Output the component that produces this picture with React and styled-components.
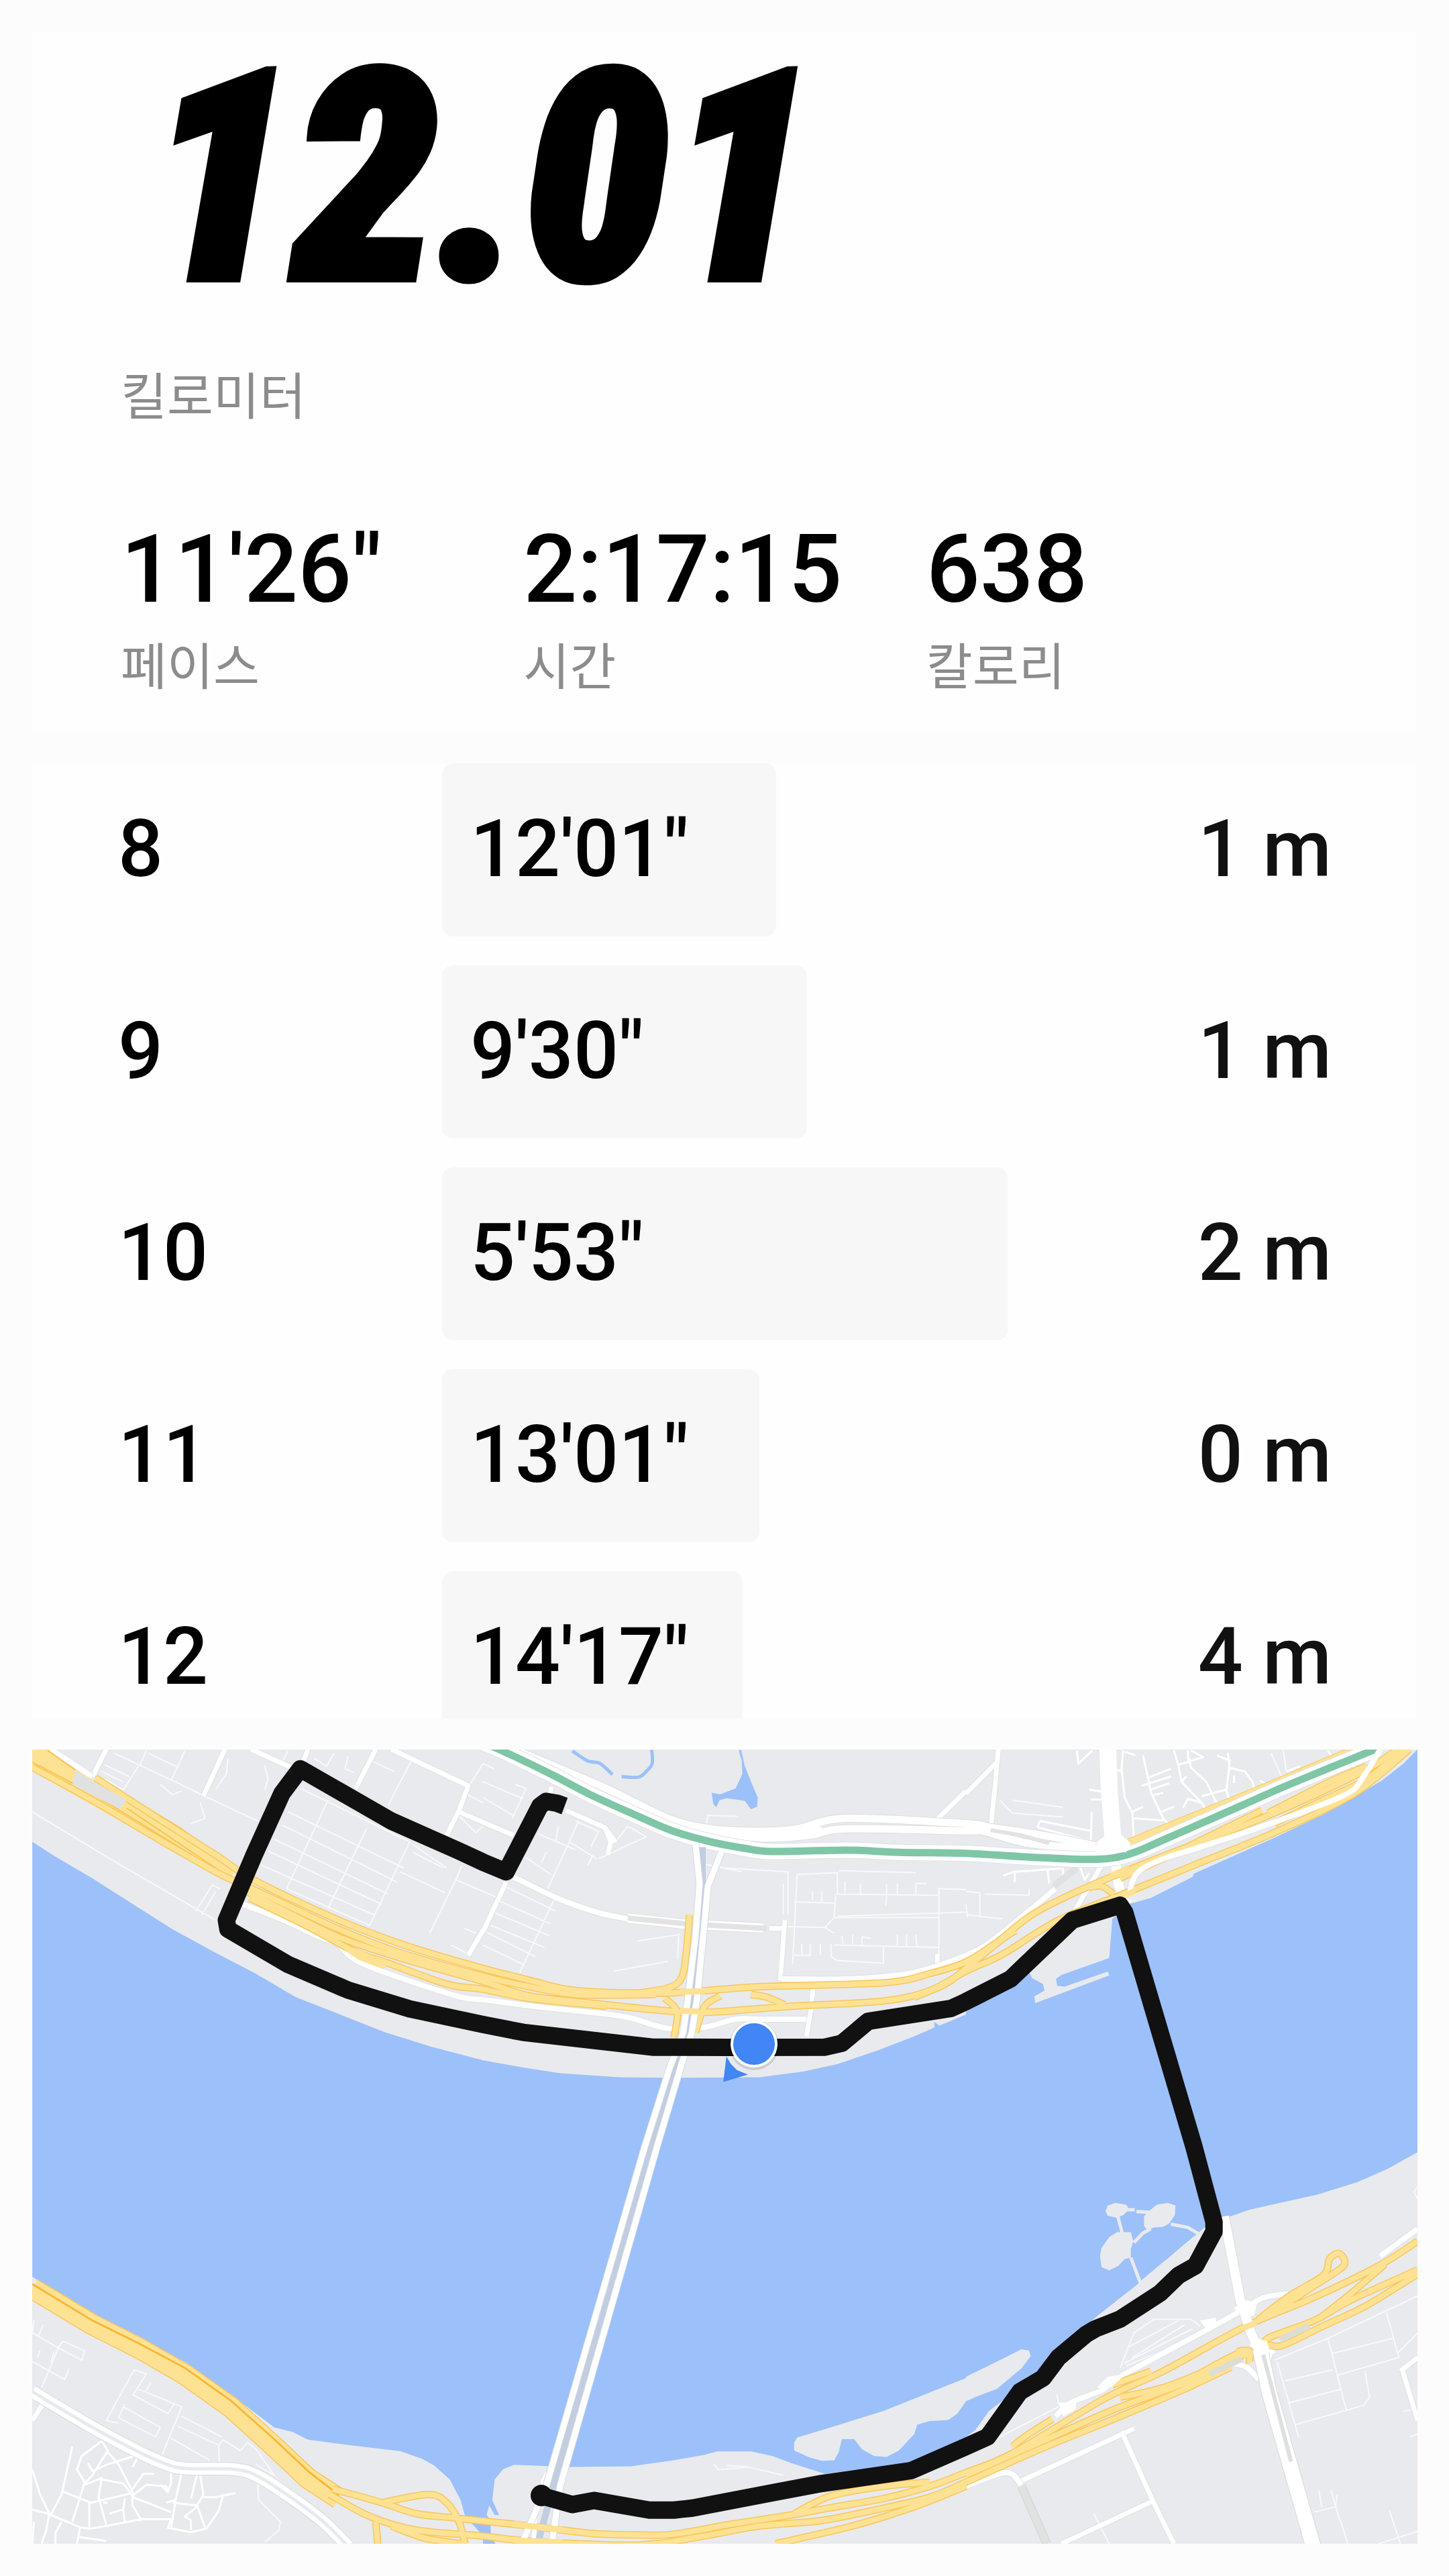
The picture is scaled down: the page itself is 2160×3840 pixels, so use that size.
import React from 'react';
import styled, { createGlobalStyle } from 'styled-components';

const GlobalStyle = createGlobalStyle`
  body {
    margin: 0;
    background: #fcfcfc;
    font-family: Roboto, "Noto Sans CJK KR", Arial, sans-serif;
    font-kerning: none;
    color: #000;
  }
`;

const Page = styled.main`
  display: flex;
  flex-direction: column;
  gap: 46px;
  padding: 48px 47px 48px 48px;
`;

const Card = styled.section`
  background: #fefefe;
  overflow: hidden;
`;

const Summary = styled(Card)`
  padding: 0 132px 55px;
`;

const Distance = styled.h1`
  margin: 0 0 54px 40px;
  font-family: "Roboto Condensed", Roboto, sans-serif;
  font-size: 436px;
  line-height: 436px;
  font-weight: 900;
  font-style: italic;
  -webkit-text-stroke: 12px #000;
`;

const Caption = styled.p`
  margin: 0;
  font-family: "Noto Sans CJK KR", sans-serif;
  font-size: 75px;
  line-height: 96px;
  font-weight: 400;
  color: #8c8c8c;
`;

const Stats = styled.dl`
  display: grid;
  grid-template-columns: repeat(3, 1fr);
  margin: 131px 0 0;
`;

const Stat = styled.div`
  display: flex;
  flex-direction: column-reverse;
  gap: 8px;
`;

const StatValue = styled.dd`
  margin: 0;
  font-size: 141px;
  line-height: 168px;
  font-weight: 500;
`;

const SplitsCard = styled(Card)`
  height: 1424px;
`;

const Splits = styled.table`
  width: 100%;
  border-spacing: 0;
  table-layout: fixed;
  font-size: 118px;
  line-height: 256px;
  font-weight: 500;
`;

const Cell = styled.td`
  padding: 0 0 43px;
  vertical-align: top;
`;

const Kilometre = styled(Cell)`
  width: 483px;
  padding-left: 128px;
`;

const Climb = styled(Cell)`
  width: 400px;
  padding-right: 128px;
  text-align: right;
  color: #111;
`;

const PaceBar = styled.div`
  box-sizing: border-box;
  height: 258px;
  padding-left: 42px;
  border-radius: 16px;
  background: #f7f7f7;
`;

const MapFrame = styled.section`
  svg {
    display: block;
    width: 100%;
    height: auto;
  }
`;

const splits = [
  { km: 8, pace: '12\'01"', climb: '1 m', bar: 498 },
  { km: 9, pace: '9\'30"', climb: '1 m', bar: 544 },
  { km: 10, pace: '5\'53"', climb: '2 m', bar: 843 },
  { km: 11, pace: '13\'01"', climb: '0 m', bar: 473 },
  { km: 12, pace: '14\'17"', climb: '4 m', bar: 448 },
];

/* Map geometry: six survey sheets, A B C above D E F, each on a 1568 unit grid. */
const sheets = {
  A: [0, 2590, 0.4592, 0.389],
  B: [720, 2590, 0.4592, 0.389],
  C: [1440, 2590, 0.4592, 0.389],
  D: [0, 3200, 0.4592, 0.4082],
  E: [720, 3200, 0.4592, 0.4082],
  F: [1440, 3200, 0.4592, 0.4082],
};

const project = (text) => {
  let sheet = sheets.A;
  const points = [];
  text.trim().split(/\s+/).forEach((token) => {
    if (sheets[token]) {
      sheet = sheets[token];
      return;
    }
    const [x, y] = token.split(',').map(Number);
    points.push([sheet[0] + x * sheet[2], sheet[1] + y * sheet[3]]);
  });
  return points;
};

const at = ([x, y]) => `${x.toFixed(1)} ${y.toFixed(1)}`;

const line = (text) => 'M' + project(text).map(at).join('L');

const curve = (text) => {
  const p = project(text);
  let d = `M${at(p[0])}`;
  for (let i = 0; i < p.length - 1; i += 1) {
    const a = p[Math.max(i - 1, 0)];
    const b = p[i];
    const c = p[i + 1];
    const e = p[Math.min(i + 2, p.length - 1)];
    d += `C${at([b[0] + (c[0] - a[0]) / 6, b[1] + (c[1] - a[1]) / 6])} ${at([c[0] - (e[0] - b[0]) / 6, c[1] - (e[1] - b[1]) / 6])} ${at(c)}`;
  }
  return d;
};

const lines = (list) => list.map(line).join('');
const curves = (list) => list.map(curve).join('');
const areas = (list) => list.map((shape) => line(shape) + 'Z').join('');

const river = areas([`A 105,400 170,450 300,540 440,645 560,735 700,825 830,905 960,995 1100,1060 1250,1130 1400,1185 1568,1237
  B 130,1265 250,1287 440,1302 600,1304 900,1302 1040,1280 1150,1252 1280,1200 1400,1145 1465,1112 1465,1090 1482,1104 1568,1062
  C 0,1050 150,950 205,900 215,922 250,945 255,970 222,992 225,1018 465,912 460,897 320,955 296,952 292,925 310,910 465,845 475,695 490,680
  510,640 540,635 600,615 735,535 740,522 1000,385 1160,295 1250,235 1350,165 1420,100 1466,45
  F 1466,20 1370,80 1270,130 1140,175 1000,210 920,230 840,262 780,290 700,365 560,500 430,615 300,740 230,830 150,900 75,965 30,1035 0,1060
  E 1568,1075 1400,1150 1110,1195 1000,1155 940,1130 870,1113 760,1113 720,1125 620,1145 480,1167 280,1170 100,1162 65,1178 38,1215 30,1290 52,1345 38,1345 20,1310 12,1345 25,1365 25,1410 40,1450 0,1450
  D 1568,1420 1555,1405 1510,1350 1495,1290 1460,1215 1410,1165 1370,1140 1300,1112 1150,1092 1000,1070 950,1042 890,1025 750,905 600,785 450,705 300,610 105,475`]);

const islands = areas([
  `E 1568,845 1300,965 1100,1035 1020,1062 1010,1080 1010,1110 1060,1135 1100,1147 1140,1145 1155,1115 1165,1068 1205,1068 1230,1105 1270,1130 1310,1133 1350,1110 1400,1050 1410,1015 1450,1002 1510,998 1540,975 1568,930
   F 40,910 100,885 180,810 210,765 205,745 180,740 100,785 0,840`,
  'F 453,235 460,215 485,205 520,212 530,230 510,250 490,260 460,252',
  'F 578,255 590,238 620,212 655,205 680,215 678,250 660,280 640,293 610,295 590,305 578,290',
  'F 435,400 440,370 465,330 490,312 535,312 543,345 535,375 535,405 515,410 495,435 465,452 440,440',
]);

const causeways = lines([
  'F 525,230 548,230', 'F 553,237 600,240', 'F 493,255 500,285 507,315', 'F 600,300 575,315 545,350',
  'F 665,283 720,295 755,318', 'F 535,405 550,450 567,500', 'F 567,498 650,420',
]);

const pond = areas(['B 830,48 838,48 850,110 870,170 892,230 890,265 870,275 850,243 790,233 768,240 757,267 748,255 742,212 770,218 820,195 842,140 840,90']);
const creeks = curves(['B 548,48 549,100 530,130 505,152 450,150', 'B 290,52 340,90 380,100 420,142']);

const lanes = lines([
  // western blocks above the expressway
  'A 370,60 560,165 665,225 840,322', 'A 475,52 455,105', 'A 600,52 555,165', 'A 935,52 918,90',
  'A 1210,92 1280,130', 'A 1335,90 1260,260', 'A 1500,490 1480,545 1395,750', 'A 1480,545 1568,590',
  'A 105,285 350,460 700,700', 'A 635,665 690,565 715,580', 'A 655,680 700,590', 'A 450,110 400,200 340,160',
  'A 740,80 735,140 700,200', 'A 650,250 665,310 620,330', 'A 480,60 580,115', 'A 860,110 870,160 860,200',
  'A 975,195 1330,400 1200,720 930,580', 'A 1065,240 930,580', 'A 1190,350 1065,655', 'A 935,285 1310,500',
  'A 915,335 1290,555', 'A 890,390 1260,600', 'A 870,435 1240,640', 'A 850,490 1215,680', 'A 1340,410 1450,500',
  'A 1300,515 1445,595', 'A 1340,440 1440,500', 'A 1085,60 1060,110 1020,80', 'A 1130,70 1120,120 1150,135',
  'A 1505,730 1545,750', 'A 1465,795 1520,830', 'A 1490,300 1545,365 1568,340', 'A 1520,220 1568,250', 'A 1568,100 1520,190',
  'A 340,105 420,150', 'A 330,130 400,170', 'A 520,180 560,220 590,205',
  // station quarter
  'B 0,100 35,120', 'B 0,170 130,235', 'B 105,180 140,195 95,310', 'B 0,230 100,300', 'B 0,590 40,610',
  'B 140,460 220,525', 'B 280,400 210,580', 'B 180,370 250,405 300,430', 'B 310,320 280,400 370,465', 'B 245,340 235,400',
  'B 205,440 190,480', 'B 300,320 375,360 350,420', 'B 340,490 355,455', 'B 375,465 530,380 470,340 430,400',
  'B 70,570 235,665', 'B 50,625 220,715', 'B 35,670 215,760', 'B 25,720 200,805', 'B 10,745 170,840', 'B 0,795 130,870',
  'B 235,610 120,900', 'B 500,780 640,755', 'B 425,895 600,858', 'B 635,760 632,850',
  // grid of the eastern estate
  'B 720,485 840,515', 'B 780,500 990,515 990,680', 'B 975,560 975,680', 'B 1020,525 1150,518 1150,600 1480,605', 'B 1020,525 1005,870',
  'B 1175,550 1175,595', 'B 1225,560 1225,600', 'B 1310,560 1310,600', 'B 1345,560 1345,600', 'B 1405,600 1405,560 1440,560',
  'B 1155,510 1405,518', 'B 1145,600 1140,690 1480,690', 'B 1150,685 1568,670', 'B 1480,575 1480,830', 'B 1480,580 1568,582',
  'B 1010,630 1140,635', 'B 1070,590 1070,625', 'B 1100,590 1100,630', 'B 990,725 1110,728 1140,690', 'B 1110,728 1140,750',
  'B 1010,835 1065,835', 'B 1035,790 1035,830', 'B 1062,790 1062,835', 'B 1095,790 1095,835', 'B 1140,795 1480,805',
  'B 1130,840 1150,855 1300,865 1300,800', 'B 1230,800 1230,765 1260,770', 'B 1345,755 1345,800', 'B 1375,755 1375,800', 'B 1405,755 1408,800', 'B 1310,600 1308,645', 'B 725,330 730,298 825,302',
  'B 1130,840 1130,790', 'B 1165,760 1168,790', 'B 1200,755 1200,790',
  // eastern side streets
  'C 0,590 45,595 45,690', 'C 60,600 205,605 205,580', 'C 5,680 120,695', 'C 110,240 150,290 315,305', 'C 150,240 315,268',
  'C 990,60 1025,150', 'C 1030,50 1040,130', 'C 0,640 5,690',
  // southern lanes
  'D 110,635 105,680 190,735 135,880', 'D 125,690 140,650', 'D 190,735 265,780 275,745 205,710 185,740', 'D 105,785 210,850 225,810',
  'D 120,770 130,745', 'D 165,790 175,750', 'D 435,815 345,1000 385,1010', 'D 435,815 475,830 430,910', 'D 450,885 590,950 525,1130',
  'D 430,905 545,975 565,940', 'D 400,950 520,1025 505,1060 385,990 405,940', 'D 590,985 720,1060', 'D 575,1020 710,1090 725,1070 780,1110',
  'D 555,1065 680,1145', 'D 710,1090 712,1150', 'D 780,1110 805,1080 835,1110 890,1200 830,1160', 'D 835,1210 840,1290 910,1370 905,1400 860,1445',
  'D 490,860 475,890', 'E 750,1160 765,1180 860,1170 975,1200', 'E 790,1165 860,1168',
  'F 500,810 545,680 610,630 730,630 760,655', 'F 530,730 690,635', 'F 515,790 735,665', 'F 540,770 710,650', 'F 520,800 780,680',
  'F 110,1060 300,950', 'F 295,905 300,940', 'F 415,1340 465,1450', 'F 1000,780 1175,700 1466,545', 'F 1010,785 1080,1060',
  'F 1175,700 1235,965', 'F 1190,755 1385,700', 'F 1035,855 1190,815', 'F 1050,935 1220,885', 'F 1070,1015 1290,945 1310,915 1295,820',
  'F 1365,605 1405,770 1205,835', 'F 1400,755 1466,680', 'F 1130,1335 1200,1315 1240,1450', 'F 1145,1255 1155,1315', 'F 1185,1255 1200,1315',
  'F 1205,1270 1200,1315', 'F 1375,1330 1410,1450', 'F 1340,1450 1466,1405', 'F 1420,965 1466,960', 'F 1440,1060 1466,1050', 'F 1466,145 1455,165 1466,190',
]);

const streets = lines([
  'C 360,50 365,100 410,50', 'C 510,50 505,120 515,230 540,290 545,390', 'C 485,125 508,128', 'C 575,70 590,150 600,210 640,310 660,335',
  'C 675,50 690,110 700,170 765,250 780,280', 'C 590,155 665,120', 'C 570,185 665,150', 'C 600,200 660,175', 'C 610,220 640,212', 'C 690,105 770,75 730,50',
  'C 725,80 730,115 780,170 815,255', 'C 850,60 855,110 850,160 845,205 855,235', 'C 850,115 905,130 930,170 935,200', 'C 765,250 720,235 705,270', 'C 765,225 845,200', 'C 870,175 870,145',
  'C 545,310 640,318', 'C 540,285 575,265', 'C 635,285 675,265', 'C 700,170 715,150', 'C 815,70 860,90', 'C 955,165 975,180 950,200', 'C 1040,130 1085,110', 'C 1175,50 1185,70', 'C 515,55 550,68',
  'C 720,50 722,100', 'C 400,200 445,208', 'C 405,238 448,238', 'C 408,285 405,395', 'C 240,320 405,358', 'C 235,345 410,400', 'C 240,320 232,345',
  'C 120,530 155,515 310,502', 'C 158,515 158,555', 'C 265,510 270,560', 'C 370,495 385,545 400,520', 'C 315,500 315,530',
  'D 330,1075 265,1130 250,1180 275,1225 235,1370', 'D 330,1075 350,1110 300,1200 275,1230', 'D 275,1235 330,1210 320,1280 345,1380', 'D 435,1130 350,1160 300,1185 285,1155',
  'D 345,1110 385,1160 430,1260 430,1310 460,1365', 'D 330,1215 400,1230 430,1275 475,1235 540,1240 545,1265', 'D 430,1265 295,1300 205,1260', 'D 290,1295 290,1390',
  'D 500,1195 465,1195 430,1250', 'D 445,1140 430,1170', 'D 555,1185 555,1230 545,1260 520,1235', 'D 590,1190 570,1290 555,1395', 'D 640,1195 620,1285', 'D 650,1200 660,1270 635,1320 600,1350 620,1365 620,1400',
  'D 660,1280 700,1280 765,1265', 'D 725,1270 710,1330 670,1395 620,1408 545,1392 555,1360 460,1360 345,1385 290,1395 260,1390 155,1340 105,1325',
  'D 560,1300 640,1310 665,1390', 'D 430,1280 500,1310 555,1335', 'D 355,1340 400,1325 405,1285', 'D 400,1325 405,1370', 'D 235,1095 220,1170 200,1270 165,1345',
  'D 105,1180 130,1270 160,1340 150,1400 135,1450', 'D 260,1390 250,1450', 'D 255,1425 345,1440', 'D 200,1370 180,1410 180,1450', 'D 540,1300 570,1290', 'D 335,1300 350,1300', 'D 110,1370 105,1450',
  'E 205,1190 190,1225 200,1235',
]);

const roads = lines([
  'A 345,45 300,150', 'A 730,45 660,225', 'A 815,45 945,115', 'A 1000,45 985,90', 'A 1220,45 1155,195', 'A 1270,45 1520,185 1490,280 1450,375', 'A 1490,285 1568,325',
  'A 1568,740 1520,835',
  'B 0,325 100,375', 'B 75,555 0,745', 'B 222,190 218,215', 'B 270,280 395,345 430,400', 'B 395,345 415,400 405,450',
  'B 980,700 965,930', 'B 1075,920 1065,1040 1050,1145', 'B 1475,830 1475,880', 'B 930,732 980,732', 'B 1460,330 1568,205',
  'C 105,45 95,180 80,350', 'C 0,215 100,95', 'C 440,490 345,680',
  'D 105,1000 145,930', 'F 180,1220 545,1030', 'F 505,1040 605,1290 675,1450', 'F 310,1450 605,1295', 'F 1415,810 1466,1000', 'F 1410,820 1466,770', 'F 430,1380 440,1385',
]);

const avenues = curves([
  'A 165,45 300,150', 'B 100,535 240,615 370,670 470,695', 'A 790,640 900,690 1040,765 1100,795 1150,850 1260,905 1480,990 1568,1005',
  'B 0,1005 200,1035 400,1060 480,1075 600,1115 720,1110 820,1080 920,1080 1050,1080', 'B 970,925 1200,925 1400,900 1568,835 C 100,765 290,580',
  'C 530,600 555,520 640,465 760,420 1000,325 1230,220 1290,150 1345,45', 'F 0,1240 130,1190 180,1235',
  'F 290,985 340,935 440,890 500,840 780,670 900,595', 'F 920,580 970,550 1045,537', 'F 860,790 910,805 950,850', 'F 970,850 985,760 1000,745', 'F 1345,400 1466,300',
]);

const boulevards = curves([
  'B 120,55 400,195 600,310 740,350 900,360 1020,350 1180,310 1568,330 C 80,345 250,375 420,415',
  'B 700,355 900,385 1060,375 1180,350 1568,358 C 60,360 200,405 430,430',
  'B 690,370 850,375 1000,365 1100,355',
]);

const northHighway = curves([
  'A 310,155 480,285 700,450 800,530 950,620 1150,725 1350,810 1568,885 B 150,930 300,970 550,980 700,972 900,955 1300,940 1450,905 1568,860 C 100,785 220,675 390,575 640,455 980,300 1290,130 1400,45',
  'A 105,115 300,240 500,380 700,515 800,570 900,625 1100,735 1300,825 1568,915 B 150,955 300,985 560,985',
  'A 800,590 900,650 1100,765 1300,845 1568,935 B 150,990 350,1018 620,1050 750,1052 1000,1030 1300,1010 1450,970 1568,895 C 120,830 300,700 510,600 760,480 1000,365 1260,215 1440,45',
  'A 810,615 1000,725 1150,820 1260,865 1450,945 1568,965 B 150,1000 400,1030',
  'B 670,680 660,820 645,920 600,960 500,980', 'B 590,1000 630,1050 620,1150', 'B 770,990 720,1030 690,1130', 'B 870,985 920,995 980,1025',
  'B 1400,995 1500,945 1568,885 C 110,780 160,740', 'C 400,575 440,570 480,600', 'C 980,290 1180,170 1300,110', 'C 1000,330 1150,245 1300,160 1420,45', 'C 500,540 700,430 960,280',
]);

const southHighway = curves([
  'D 1080,1250 1240,1300 1350,1340 1470,1355 1568,1367 E 150,1385 350,1412 500,1418 620,1415 800,1380 1000,1345 1120,1320 1300,1285 1450,1240 1568,1190 F 150,1120 450,920 640,820 910,655 1130,550 1340,435 1466,345',
  'D 1070,1270 1200,1350 1350,1400 1568,1422 E 150,1440 500,1455 700,1425 900,1385 1100,1365 1300,1320 1450,1280 1568,1225 F 250,1100 500,985 700,890 860,805',
  'E 950,1450 1200,1385 1400,1315 1568,1240', 'E 1010,1340 1130,1275 1300,1240 1450,1225', 'F 0,1200 250,1075 480,960 740,850 900,760',
  'D 1240,1300 1390,1270 1450,1300 1490,1370 1510,1450', 'D 1220,1370 1226,1450', 'D 1270,1385 1380,1430 1500,1450',
  'F 150,1095 190,1060 280,995', 'F 475,870 600,820', 'F 500,915 640,880 800,810', 'F 910,770 900,745 880,750', 'F 920,790 905,745 740,840',
  'F 950,630 1050,545 1160,470 1180,410 1210,390 1230,420 1210,450 1100,530 1000,605', 'F 1150,625 1240,545 1360,430', 'F 985,730 980,700 1130,635 1250,560 1466,450', 'F 985,725 1030,725 1150,660 1300,580 1466,465',
]);

const junctions = areas([
  'C 425,400 455,375 500,370 535,405 520,440 420,440',
  'F 870,590 905,560 945,570 935,615 905,630',
  'F 760,635 810,625 815,650 785,675',
  'F 300,935 360,932 355,960 315,985',
  'F 425,880 460,840 520,830 470,880',
  'F 920,725 940,700 975,710 985,740 1005,745 960,760',
]);

const trail = line(`B 265,263 240,252 205,245 185,262 75,515
  A 1568,478 1490,435 1270,320 975,120 915,215 825,450 735,700 740,735 935,870 1130,968 1330,1040 1568,1100
  B 130,1130 550,1187 800,1188 1110,1187 1165,1172 1250,1088 1520,1038
  C 0,1012 145,925 345,700 500,643 515,670 600,1010 740,1568
  F 805,275 805,310 745,435 690,470 630,535 500,630 420,665 390,685 300,770 250,845 175,895 70,1060 0,1095
  E 1390,1183 1100,1230 950,1262 680,1320 620,1327 540,1327 360,1292 290,1307 190,1275`);

const railway = curve('B 0,20 70,55 220,140 350,220 500,300 620,360 740,400 850,425 940,437 1180,432 1350,440 1568,444 C 200,458 420,467 530,447 650,388 900,258 1050,180 1340,40');
const bridgeWest = line('B 690,410 703,560 690,760 665,1000 650,1130 605,1270 525,1568 E 205,1240 130,1440');
const bridgeEast = line('B 775,435 730,570 715,760 695,1000 678,1130 645,1250 565,1568 E 250,1240 225,1440');
const bridgeMid = line('B 712,420 712,560 702,760 680,1000 664,1130 625,1260 545,1568 E 228,1240 180,1440');
const southRoad = curve('D 105,895 300,1025 450,1115 530,1155 600,1175 760,1178 840,1205 950,1285 1050,1370 1130,1460');

function Road({ d, width, color, edge, edgeColor }) {
  return (
    <g fill="none" strokeLinejoin="round">
      {edge ? <path d={d} stroke={edgeColor} strokeWidth={width + edge} /> : null}
      <path d={d} stroke={color} strokeWidth={width} />
    </g>
  );
}

function RouteMap() {
  return (
    <svg viewBox="48 2608 2065 1184" role="img" aria-label="러닝 경로 지도">
      <rect x="48" y="2608" width="2065" height="1184" fill="#e8eaed" />
      <path d={river} fill="#9cc0fa" />
      <path d={islands} fill="#e8eaed" />
      <Road d={causeways} width={5} color="#e8eaed" />
      <path d={pond} fill="#9cc0fa" />
      <Road d={creeks} width={5} color="#9cc0fa" />
      <Road d={lanes} width={2} color="#f8f9fb" />
      <Road d={streets} width={3} color="#fff" />
      <Road d={roads} width={7} color="#fff" edge={2} edgeColor="#dfe1e4" />
      <Road d={boulevards} width={11} color="#fff" edge={2} edgeColor="#dcdee0" />
      <Road d={avenues} width={8} color="#fff" edge={2} edgeColor="#dfe1e4" />
      <Road d={line('C 460,40 465,200 478,400')} width={25} color="#fff" />
      <Road d={line('C 485,450 490,530 505,620 530,640')} width={14} color="#fff" />
      <Road d={southRoad} width={18} color="#fff" edge={2} edgeColor="#d8dadd" />
      <Road d={southRoad} width={5} color="#e8eaed" />
      <Road d={line('B 470,692 650,715 910,730')} width={14} color="#fff" edge={2} edgeColor="#dcdee0" />
      <Road d={line('B 470,692 650,713 920,732')} width={8} color="#e3e3e3" />
      <Road d={line('C 80,355 180,375 270,405')} width={6} color="#e3e3e3" />
      <Road d={line('C 360,500 285,570')} width={10} color="#e0e1e3" />
      <Road d={line('F 180,1240 262,1450')} width={11} color="#e0e1e1" edge={2} edgeColor="#d2d3d4" />
      <path d={areas(['A 105,45 155,45 245,125 400,225 590,350 700,445 760,510 750,545 560,435 105,130'])} fill="#fde293" />
      <Road d={lines(['A 155,50 245,125', 'A 310,150 590,350 690,440', 'A 105,95 300,215 650,470', 'A 410,270 700,500'])} width={2} color="#f9c553" />
      <Road d={northHighway} width={8} color="#fde293" edge={3} edgeColor="#f9c65c" />
      <path d={areas(['A 245,128 410,240 390,275 235,180'])} fill="#e0e1e2" />
      <path d={areas(['A 1080,780 1180,820 1260,865 1245,888 1160,850'])} fill="#fde293" />
      <Road d={line('D 105,518 300,650 450,735 600,832 750,952 890,1095 1000,1212 1100,1285')} width={29} color="#fde293" edge={3} edgeColor="#f9c65c" />
      <Road d={line('D 105,502 300,635 450,718 600,808 750,928 890,1068 1000,1185 1100,1272')} width={3} color="#f9b83a" />
      <Road d={southHighway} width={8} color="#fde293" edge={3} edgeColor="#f9c65c" />
      <Road d={lines(['F 790,830 895,775', 'F 1020,705 1115,655'])} width={9} color="#dcddd5" />
      <Road d={line('C 530,405 900,228 1260,50')} width={12} color="#fde293" edge={2} edgeColor="#f9c866" />
      <Road d={railway} width={23} color="#fff" edge={2} edgeColor="#dfe1e4" />
      <Road d={railway} width={11} color="#7fc6a6" />
      <Road d={curve('C 530,600 555,520 640,465 760,420 1000,325 1230,220 1290,150 1345,45')} width={8} color="#fff" />
      <Road d={line('E 200,1225 170,1320 165,1440')} width={6} color="#fff" />
      <Road d={bridgeMid} width={10} color="#c3cde0" />
      <Road d={bridgeWest} width={9} color="#fff" edge={2} edgeColor="#d3dbe8" />
      <Road d={bridgeEast} width={9} color="#fff" edge={2} edgeColor="#d3dbe8" />
      <Road d={lines(['B 640,975 720,972', 'B 640,1047 700,1050', 'E 100,1378 260,1400', 'E 100,1438 260,1445'])} width={9} color="#fde293" />
      <Road d={line('F 838,255 890,560 925,680 950,740')} width={14} color="#fff" edge={2} edgeColor="#dcdee0" />
      <Road d={line('F 955,740 985,900 1130,1470')} width={22} color="#fff" edge={2} edgeColor="#d8dadd" />
      <Road d={line('F 965,760 1055,1150')} width={6} color="#dedfdf" />
      <path d={junctions} fill="#fff" />
      <Road d={lines(['F 900,662 945,642', 'C 470,530 530,500', 'C 480,620 550,588'])} width={9} color="#fde293" />
      <path d={trail} fill="none" stroke="#111" strokeWidth="26" strokeLinejoin="round" />
      <circle cx="807" cy="3720" r="16" fill="#111" />
      <path d={areas(['B 790,1222 805,1252 825,1275 860,1292 780,1320'])} fill="#4285f4" />
      <circle cx="1124" cy="3049" r="37" fill="#000" opacity="0.12" />
      <circle cx="1124" cy="3047" r="35" fill="#fff" />
      <circle cx="1124" cy="3047" r="31" fill="#4285f4" />
    </svg>
  );
}

export default function App() {
  return (
    <>
      <GlobalStyle />
      <Page>
        <Summary>
          <Distance>12.01</Distance>
          <Caption>킬로미터</Caption>
          <Stats>
            <Stat>
              <Caption as="dt">페이스</Caption>
              <StatValue>11'26"</StatValue>
            </Stat>
            <Stat>
              <Caption as="dt">시간</Caption>
              <StatValue>2:17:15</StatValue>
            </Stat>
            <Stat>
              <Caption as="dt">칼로리</Caption>
              <StatValue>638</StatValue>
            </Stat>
          </Stats>
        </Summary>
        <SplitsCard>
          <Splits>
            <tbody>
              {splits.map((split) => (
                <tr key={split.km}>
                  <Kilometre>{split.km}</Kilometre>
                  <Cell>
                    <PaceBar style={{ width: split.bar }}>{split.pace}</PaceBar>
                  </Cell>
                  <Climb>{split.climb}</Climb>
                </tr>
              ))}
            </tbody>
          </Splits>
        </SplitsCard>
        <MapFrame>
          <RouteMap />
        </MapFrame>
      </Page>
    </>
  );
}
